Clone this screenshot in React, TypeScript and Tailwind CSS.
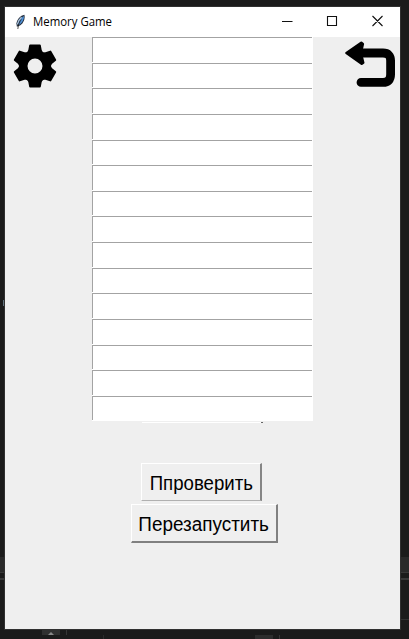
import React from "react";

const rows = Array.from({ length: 15 }, (_, i) => i);
const teeth = [0, 60, 120, 180, 240, 300];

function Feather() {
  return (
    <svg width="12" height="18" viewBox="0 0 12 18" className="shrink-0">
      <path d="M9.4 1.7C5.5 2.5 2 6 1.4 10.5L1.9 13.8L5 12.6C8.5 10 10.4 5.5 9.4 1.7Z" fill="#26303f" />
      <path d="M8.8 3C6 5 4 8.5 3.6 12.4C7.4 9.8 9.3 6 8.8 3Z" fill="#4f94dc" />
      <path d="M6.6 4.2C4.2 6.4 2.7 8.6 2.4 11.3" stroke="#a9c3df" strokeWidth="1.4" fill="none" />
      <path d="M6.4 6.4C4.6 9 3.4 11.5 2.8 16" stroke="#111" strokeWidth="0.7" fill="none" />
    </svg>
  );
}

function Gear() {
  return (
    <svg width="44" height="44" viewBox="-22 -22 44 44">
      <circle r="11.8" fill="none" stroke="#000" strokeWidth="8.6" />
      {teeth.map((a) => (
        <path
          key={a}
          transform={`rotate(${a})`}
          d="M-4.9 -21.5H4.9Q5.7 -21.5 5.8 -20.7L6.7 -15.9L8.5 -12.5H-8.5L-6.7 -15.9L-5.8 -20.7Q-5.7 -21.5 -4.9 -21.5Z"
        />
      ))}
    </svg>
  );
}

function BackArrow() {
  return (
    <svg width="51" height="47" viewBox="0 0 51 47">
      <path d="M15 12H38Q45.6 12 45.6 19.8V33.3Q45.6 41.4 38 41.4H16" fill="none" stroke="#000" strokeWidth="8.8" strokeLinecap="round" />
      <path d="M1.5 12L16.3 1.8L17.8 3L15.8 12L18.2 21.7L16.7 22.7Z" stroke="#000" strokeWidth="2.6" strokeLinejoin="round" />
    </svg>
  );
}

export default function App() {
  return (
    <div className="relative h-[639px] w-[409px] overflow-hidden bg-[#1b1b1b] pl-[5px] pt-[7px]">
      <div className="absolute left-0 top-[557px] h-[16px] w-full border-b border-[#383838] bg-[#292929]" />
      <div className="absolute left-0 top-[578px] h-[2px] w-full bg-[#383838]" />
      <div className="absolute left-[401px] top-[619px] h-px w-[8px] bg-[#303030]" />
      <div className="absolute left-[3px] top-[300px] h-[6px] w-[2px] bg-[#60727d]" />
      <div className="absolute left-[42px] top-[630px] flex h-[5px] w-[18px] items-end justify-center bg-[#303030]">
        <svg width="6" height="3" viewBox="0 0 6 3"><path d="M0 3L3 0L6 3Z" fill="#888" /></svg>
      </div>
      <div className="absolute left-[66px] top-[630px] h-[5px] w-px bg-[#363636]" />
      <div className="absolute left-[103px] top-[635px] h-[4px] w-px bg-[#2c2c2c]" />
      <div className="absolute left-[255px] top-[635px] h-[4px] w-[18px] bg-[#2d2d2d]" />
      <div className="absolute left-[279px] top-[635px] h-[4px] w-px bg-[#363636]" />

      <main className="relative flex h-[622px] w-[395px] flex-col bg-[#efefef] shadow-[0_0_0_1px_#303030]">
        <header className="flex h-[30px] shrink-0 items-center bg-white">
          <div className="ml-[10px] flex flex-1 items-center gap-[6px]">
            <Feather />
            <h1 className="origin-left scale-x-[0.95] whitespace-nowrap font-['Open_Sans','Noto_Sans',sans-serif] text-[12px] leading-4 text-black">Memory Game</h1>
          </div>
          <svg width="125" height="30" viewBox="0 0 125 30" fill="none" stroke="#111" className="shrink-0">
            <path d="M7 14.5H17.5M52.5 9.5H61.5V18.5H52.5ZM97.5 9L107.5 19M107.5 9L97.5 19" strokeWidth="1.1" />
          </svg>
        </header>
        <div className="flex h-[384px] shrink-0 items-start">
          <div className="w-[87px] pl-[7.5px] pt-[7px]"><Gear /></div>
          <div className="grid h-[384.5px] w-[221px] grid-rows-[repeat(15,minmax(0,1fr))]">
            {rows.map((i) => (
              <div key={i} className="border-r border-white bg-white">
                <div className="h-[calc(100%-1px)] border-l border-t border-[#a3a3a3]" />
              </div>
            ))}
          </div>
          <div className="w-[87px] pl-[32px] pt-[4px]"><BackArrow /></div>
        </div>
        <div className="ml-[137px] mt-px flex h-px w-[121px] shrink-0 justify-end self-start bg-white">
          <div className="h-px w-[2px] bg-[#666]" />
        </div>
        <div className="mt-[40px] flex w-[399px] flex-col items-center gap-[3px] font-['Liberation_Sans',Arial,sans-serif] text-[19.6px] leading-none text-black">
          <button className="mr-[6px] flex h-[38px] w-[121px] items-center justify-center whitespace-nowrap border-b border-l border-r-2 border-t border-b-[#b0b0b0] border-l-white border-r-[#858585] border-t-white bg-[#efefef] pt-[3px]">
            <span className="scale-x-[0.95]">Ппроверить</span>
          </button>
          <button className="flex h-[39px] w-[147px] items-center justify-center whitespace-nowrap border-b-2 border-l border-r-2 border-t border-b-[#808080] border-l-white border-r-[#808080] border-t-white bg-[#efefef] pt-[3px]">
            <span className="scale-x-[0.965]">Перезапустить</span>
          </button>
        </div>
      </main>
    </div>
  );
}
